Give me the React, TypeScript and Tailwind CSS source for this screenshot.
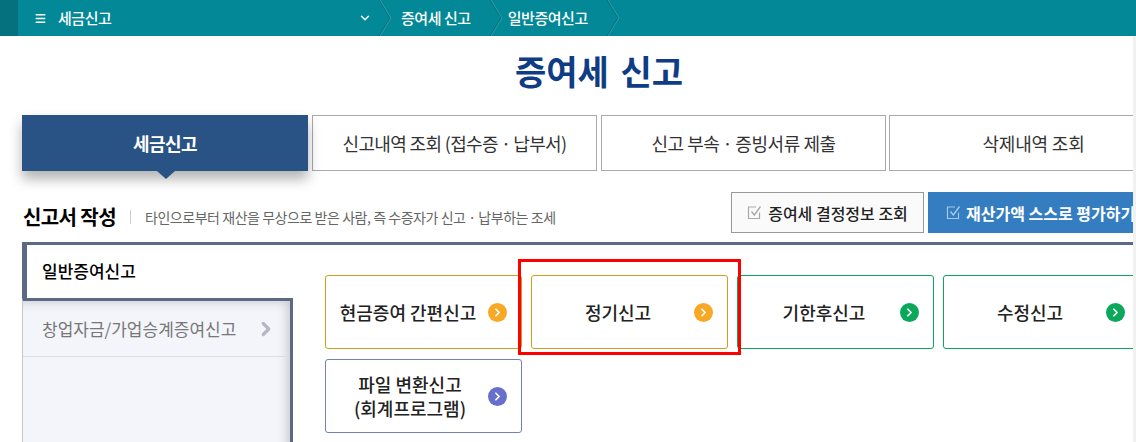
import { ChevronDown, ChevronRight, Menu } from 'lucide-react';

const KR = "font-['Noto_Sans_CJK_KR','Noto_Sans',sans-serif]";

function Crumb() {
  return (
    <svg width="14" height="36" viewBox="0 0 14 36" className="shrink-0">
      <path d="M1 0 L12 18 L1 36" fill="none" stroke="#0b6b78" strokeWidth="1" />
      <path d="M2 0 L13 18 L2 36" fill="none" stroke="#2b9ea9" strokeWidth="1" />
    </svg>
  );
}

function CheckBox({ color }: { color: string }) {
  return (
    <svg width="15" height="15" viewBox="0 0 15 15" fill="none" className="shrink-0">
      <path d="M12.5 7.5 V13.5 H1.5 V2 H9" stroke={color} strokeWidth="1.2" />
      <path d="M4.5 6.5 L7.3 10 L13.5 1.5" stroke={color} strokeWidth="1.4" />
    </svg>
  );
}

function Tab({ label, width, active }: { label: string; width: string; active?: boolean }) {
  if (active) {
    return (
      <div className={`relative flex h-[56px] shrink-0 items-center justify-center bg-[#285384] text-[18px] font-bold tracking-[-0.5px] text-white shadow-[0_8px_12px_rgba(0,0,0,0.3)] ${width}`}>
        {label}
        <div className="absolute left-[135px] top-[56px] h-0 w-0 border-x-[9px] border-t-[8px] border-x-transparent border-t-[#285384]" />
      </div>
    );
  }
  return (
    <div className={`flex h-[56px] shrink-0 items-center justify-center border border-[#aaaaaa] bg-white text-[18px] whitespace-nowrap text-[#333333] ${width}`}>
      {label}
    </div>
  );
}

function Arrow({ color }: { color: string }) {
  return (
    <span className={`mr-[14px] flex h-[19px] w-[19px] shrink-0 items-center justify-center rounded-full ${color}`}>
      <ChevronRight size={13} strokeWidth={3.2} className="text-white" />
    </span>
  );
}

function Card({ lines, border, dot, pad }: { lines: string[]; border: string; dot: string; pad: string }) {
  return (
    <div className={`flex h-[74px] w-[197px] shrink-0 items-center rounded-[3px] border bg-white ${pad} ${border}`}>
      <div className="flex-1 text-center text-[18px] leading-[24px] font-medium text-[#222222]">
        {lines.map((l) => (
          <div key={l} className="whitespace-nowrap">{l}</div>
        ))}
      </div>
      <Arrow color={dot} />
    </div>
  );
}

export default function App() {
  return (
    <div className={`relative h-[442px] w-[1136px] overflow-hidden bg-white ${KR}`}>
      {/* Top bar */}
      <div className="flex h-[36px] items-center bg-[#028896] text-[15px] font-medium tracking-[-0.45px] text-white">
        <div className="h-full w-[18px] shrink-0 bg-[#05707e]" />
        <div className="flex w-[360px] shrink-0 items-center pr-[6px] pl-[16px]">
          <Menu size={13} strokeWidth={2.5} />
          <span className="ml-[11px] flex-1">세금신고</span>
          <ChevronDown size={14} strokeWidth={2.5} />
        </div>
        <Crumb />
        <span className="ml-[9px]">증여세 신고</span>
        <span className="ml-[18px]"><Crumb /></span>
        <span className="ml-[5px]">일반증여신고</span>
        <span className="ml-[18px]"><Crumb /></span>
      </div>

      <div className="w-[1133px]">
        <h1 className="mt-[9px] h-[54px] pl-[515px] text-[34px] leading-[52px] font-bold whitespace-nowrap text-[#0f3d85] [word-spacing:4px]">
          증여세 신고
        </h1>

        {/* Tabs */}
        <div className="mt-[16px] flex gap-[4px] pl-[22px]">
          <Tab label="세금신고" width="w-[286px]" active />
          <Tab label={'신고내역 조회 (접수증\u2009·\u2009납부서)'} width="w-[285px] tracking-[-0.65px]" />
          <Tab label={'신고 부속\u2009·\u2009증빙서류 제출'} width="w-[285px] tracking-[-0.45px]" />
          <Tab label="삭제내역 조회" width="-ml-px w-[289px] tracking-[-0.2px]" />
        </div>

        {/* Section header */}
        <div className="mt-[21px] flex h-[41px] items-start pl-[23px]">
          <div className="flex h-[41px] items-center pt-[9px]">
            <span className="text-[20px] font-bold tracking-[-0.6px] whitespace-nowrap text-black">신고서 작성</span>
            <span className="ml-[14px] h-[14px] w-px bg-[#cccccc]" />
            <span className="ml-[14px] text-[14px] tracking-[-0.45px] whitespace-nowrap text-[#666666]">
              타인으로부터 재산을 무상으로 받은 사람, 즉 수증자가 신고 · 납부하는 조세
            </span>
          </div>
          <div className="ml-auto flex gap-[4px]">
            <button className="flex h-[41px] w-[193px] items-center justify-center gap-[6px] border border-[#999999] bg-[#fafafa] text-[16px] font-medium whitespace-nowrap text-[#222222]">
              <CheckBox color="#aaaaaa" />
              증여세 결정정보 조회
            </button>
            <button className="flex h-[41px] w-[205px] items-center gap-[5px] overflow-hidden bg-[#337dc0] pl-[18px] text-[16px] font-bold whitespace-nowrap text-white">
              <CheckBox color="#a9c8e6" />
              재산가액 스스로 평가하기
            </button>
          </div>
        </div>

        {/* Panel */}
        <div className="mt-[9px] ml-[22px] flex h-[200px] border-t-[3px] border-[#5a6a85]">
          <div className="w-[271px] shrink-0">
            <div className="flex h-[53px] items-center border-l-[5px] border-[#5a6a85] bg-white pb-[2px] pl-[15px] text-[17px] font-medium text-black">
              일반증여신고
            </div>
            <div className="h-full border-t-[3px] border-r-[3px] border-l border-t-[#5a6a85] border-r-[#5a6a85] border-l-[#c8c8c8] bg-[#f3f5fa] shadow-[inset_-10px_8px_12px_-8px_rgba(0,0,0,0.2)]">
              <div className="flex h-[56px] items-center justify-between border-b border-[#dddddd] pr-[13px] pl-[19px] text-[17px] whitespace-nowrap text-[#777777]">
                창업자금/가업승계증여신고
                <ChevronRight size={22} strokeWidth={3.5} className="text-[#b5b8c4]" />
              </div>
            </div>
          </div>

          <div className="ml-[32px] flex w-[824px] shrink-0 flex-wrap content-start gap-x-[9px] gap-y-[10px] pt-[30px]">
            <Card lines={['현금증여 간편신고']} border="border-[#d49a1e]" dot="bg-[#f9a825]" pad="pl-[2px]" />
            <Card lines={['정기신고']} border="border-[#d49a1e]" dot="bg-[#f9a825]" pad="pl-[10px]" />
            <Card lines={['기한후신고']} border="border-[#0aa85a]" dot="bg-[#0aa85a]" pad="pl-[10px]" />
            <Card lines={['수정신고']} border="border-[#0aa85a]" dot="bg-[#0aa85a]" pad="pl-[10px]" />
            <Card lines={['파일 변환신고', '(회계프로그램)']} border="border-[#7480b8]" dot="bg-[#6670cc]" pad="pl-[6px]" />
          </div>
        </div>
      </div>

      {/* Red highlight box drawn over the screenshot */}
      <div className="absolute top-[259px] left-[518px] h-[96px] w-[223px] border-[3px] border-[#ff0000]" />
      {/* scrollbar sliver */}
      <div className="absolute top-[36px] right-0 bottom-0 w-[3px] bg-[#f1f1f1]" />
    </div>
  );
}
